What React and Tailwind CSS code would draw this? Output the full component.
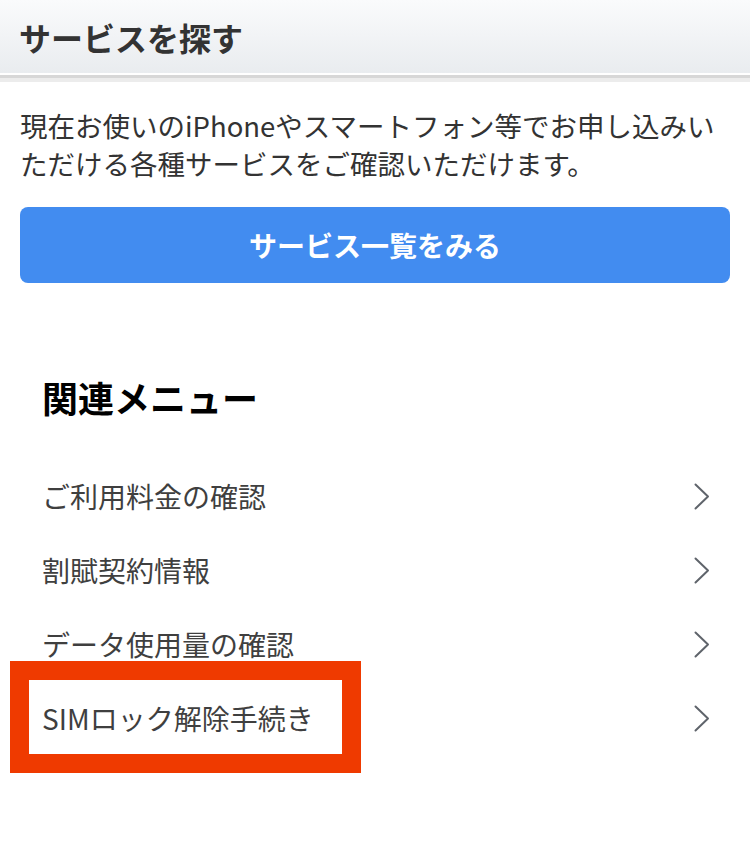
const font = { fontFamily: '"Noto Sans CJK JP", "Noto Sans", sans-serif' };

const menu = ["ご利用料金の確認", "割賦契約情報", "データ使用量の確認", "SIMロック解除手続き"];

function Chevron() {
  return (
    <svg width="16" height="27" viewBox="0 0 16 27" fill="none">
      <polyline points="1.5,1.5 14,13.5 1.5,25.5" stroke="#5f646b" strokeWidth="2" strokeLinecap="round" strokeLinejoin="round" />
    </svg>
  );
}

export default function App() {
  return (
    <div className="relative w-[750px] h-[842px] bg-white overflow-hidden" style={font}>
      {/* Header */}
      <div className="h-[73px] flex items-center pl-[19px] bg-gradient-to-b from-[#fafbfc] to-[#e9ecef]">
        <h1 className="text-[32px] font-bold text-[#333] leading-none">サービスを探す</h1>
      </div>
      <div className="h-[2px] bg-white" />
      <div className="h-[3px] bg-[#d7d7d7]" />
      <div className="h-[4px] bg-[#ececec]" />

      {/* Intro */}
      <div className="px-5 pt-[24px]">
        <p className="text-[27.5px] leading-[38px] text-[#333] whitespace-nowrap">
          現在お使いのiPhoneやスマートフォン等でお申し込みい
          <br />
          ただける各種サービスをご確認いただけます。
        </p>
        <button className="mt-[25px] w-full h-[76px] rounded-[8px] bg-[#428cf0] text-white text-[28px] font-bold flex items-center justify-center">
          サービス一覧をみる
        </button>
      </div>

      {/* Related menu */}
      <div className="pl-[42px] pr-[40px] pt-[94px]">
        <h2 className="text-[36px] leading-[40px] font-bold text-black">関連メニュー</h2>
        <ul className="mt-[42px]">
          {menu.map((m) => (
            <li key={m} className="h-[74px] flex items-center justify-between">
              <span className="text-[28px] text-[#3f3f3f]">{m}</span>
              <Chevron />
            </li>
          ))}
        </ul>
      </div>

      {/* Highlight frame */}
      <div className="absolute left-[10px] top-[661px] w-[351px] h-[112px] border-[19px] border-[#ef3a00] pointer-events-none" />
    </div>
  );
}
